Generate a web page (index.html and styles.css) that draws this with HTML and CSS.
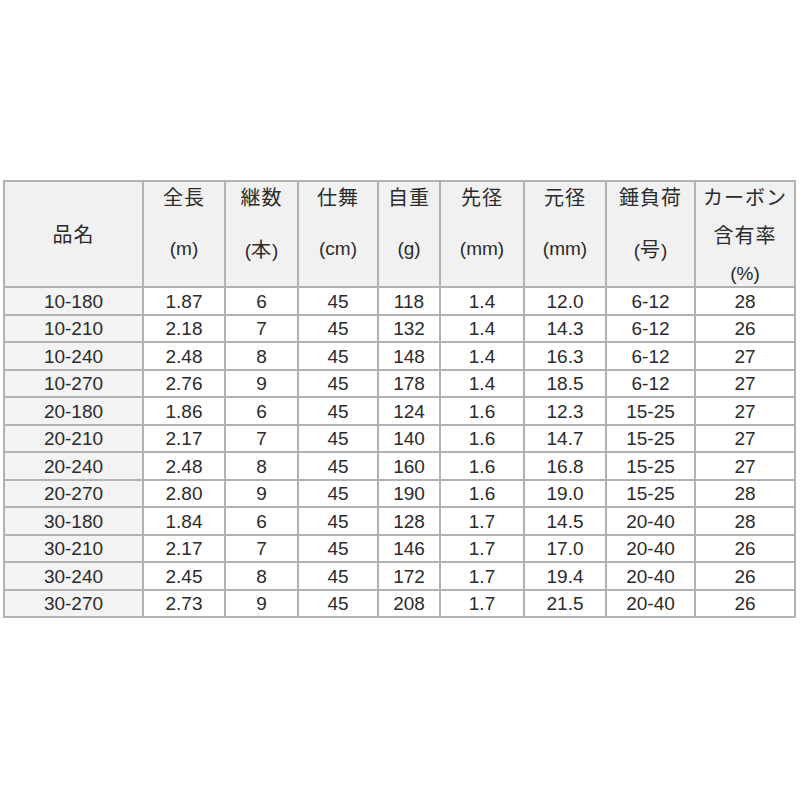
FILE: index.html
```html
<!DOCTYPE html>
<html lang="ja">
<head>
<meta charset="utf-8">
<title>仕様表</title>
<link rel="stylesheet" href="styles.css">
</head>
<body>
<div class="spec" role="table">
  <div class="h name" role="columnheader"><span class="jp">品名</span></div>
  <div class="h" role="columnheader"><span class="l1 jp">全長</span><span class="l2b">(m)</span></div>
  <div class="h" role="columnheader"><span class="l1 jp">継数</span><span class="l2b">(<span class="jp">本</span>)</span></div>
  <div class="h" role="columnheader"><span class="l1 jp">仕舞</span><span class="l2b">(cm)</span></div>
  <div class="h" role="columnheader"><span class="l1 jp">自重</span><span class="l2b">(g)</span></div>
  <div class="h" role="columnheader"><span class="l1 jp">先径</span><span class="l2b">(mm)</span></div>
  <div class="h" role="columnheader"><span class="l1 jp">元径</span><span class="l2b">(mm)</span></div>
  <div class="h" role="columnheader"><span class="l1 jp">錘負荷</span><span class="l2b">(<span class="jp">号</span>)</span></div>
  <div class="h" role="columnheader"><span class="l1 jp">カーボン</span><span class="l2 jp">含有率</span><span class="l3">(%)</span></div>

  <div class="c first">10-180</div><div class="c">1.87</div><div class="c">6</div><div class="c">45</div><div class="c">118</div><div class="c">1.4</div><div class="c">12.0</div><div class="c">6-12</div><div class="c">28</div>
  <div class="c first">10-210</div><div class="c">2.18</div><div class="c">7</div><div class="c">45</div><div class="c">132</div><div class="c">1.4</div><div class="c">14.3</div><div class="c">6-12</div><div class="c">26</div>
  <div class="c first">10-240</div><div class="c">2.48</div><div class="c">8</div><div class="c">45</div><div class="c">148</div><div class="c">1.4</div><div class="c">16.3</div><div class="c">6-12</div><div class="c">27</div>
  <div class="c first">10-270</div><div class="c">2.76</div><div class="c">9</div><div class="c">45</div><div class="c">178</div><div class="c">1.4</div><div class="c">18.5</div><div class="c">6-12</div><div class="c">27</div>
  <div class="c first">20-180</div><div class="c">1.86</div><div class="c">6</div><div class="c">45</div><div class="c">124</div><div class="c">1.6</div><div class="c">12.3</div><div class="c">15-25</div><div class="c">27</div>
  <div class="c first">20-210</div><div class="c">2.17</div><div class="c">7</div><div class="c">45</div><div class="c">140</div><div class="c">1.6</div><div class="c">14.7</div><div class="c">15-25</div><div class="c">27</div>
  <div class="c first">20-240</div><div class="c">2.48</div><div class="c">8</div><div class="c">45</div><div class="c">160</div><div class="c">1.6</div><div class="c">16.8</div><div class="c">15-25</div><div class="c">27</div>
  <div class="c first">20-270</div><div class="c">2.80</div><div class="c">9</div><div class="c">45</div><div class="c">190</div><div class="c">1.6</div><div class="c">19.0</div><div class="c">15-25</div><div class="c">28</div>
  <div class="c first">30-180</div><div class="c">1.84</div><div class="c">6</div><div class="c">45</div><div class="c">128</div><div class="c">1.7</div><div class="c">14.5</div><div class="c">20-40</div><div class="c">28</div>
  <div class="c first">30-210</div><div class="c">2.17</div><div class="c">7</div><div class="c">45</div><div class="c">146</div><div class="c">1.7</div><div class="c">17.0</div><div class="c">20-40</div><div class="c">26</div>
  <div class="c first">30-240</div><div class="c">2.45</div><div class="c">8</div><div class="c">45</div><div class="c">172</div><div class="c">1.7</div><div class="c">19.4</div><div class="c">20-40</div><div class="c">26</div>
  <div class="c first">30-270</div><div class="c">2.73</div><div class="c">9</div><div class="c">45</div><div class="c">208</div><div class="c">1.7</div><div class="c">21.5</div><div class="c">20-40</div><div class="c">26</div>
</div>
</body>
</html>
```

FILE: styles.css
```css
html, body {
  margin: 0;
  padding: 0;
  background: #ffffff;
}

body {
  font-family: "Liberation Sans", "Noto Sans CJK JP", sans-serif;
  font-size: 19px;
  color: #2b2b2b;
}

.spec {
  display: grid;
  grid-template-columns: 139px 82px 73px 80px 62px 84px 82px 89px 100px;
  grid-template-rows: 106px repeat(6, 28px 27px);
  width: max-content;
  margin: 180px 0 0 3px;
  border-top: 2px solid #b2b2b2;
  border-left: 2px solid #b2b2b2;
}

.h,
.c {
  box-sizing: border-box;
  border-right: 2px solid #b2b2b2;
  border-bottom: 2px solid #b2b2b2;
  text-align: center;
}

.h {
  background: #f1f1f1;
  display: flex;
  flex-direction: column;
  align-items: center;
  font-weight: normal;
}

.h.name {
  justify-content: center;
}

.h span {
  display: block;
  line-height: 30px;
}

.h span span {
  display: inline;
}

.jp {
  font-family: "Noto Sans CJK JP", "Liberation Sans", sans-serif;
  font-size: 20px;
  letter-spacing: 1px;
}

.l2 {
  margin-top: 8px;
}

.l2b {
  margin-top: 22px;
}

.l3 {
  margin-top: 9px;
}

.c {
  display: flex;
  align-items: center;
  justify-content: center;
  background: #ffffff;
  line-height: 1;
}

.c.first {
  background: #f3f3f3;
}
```
